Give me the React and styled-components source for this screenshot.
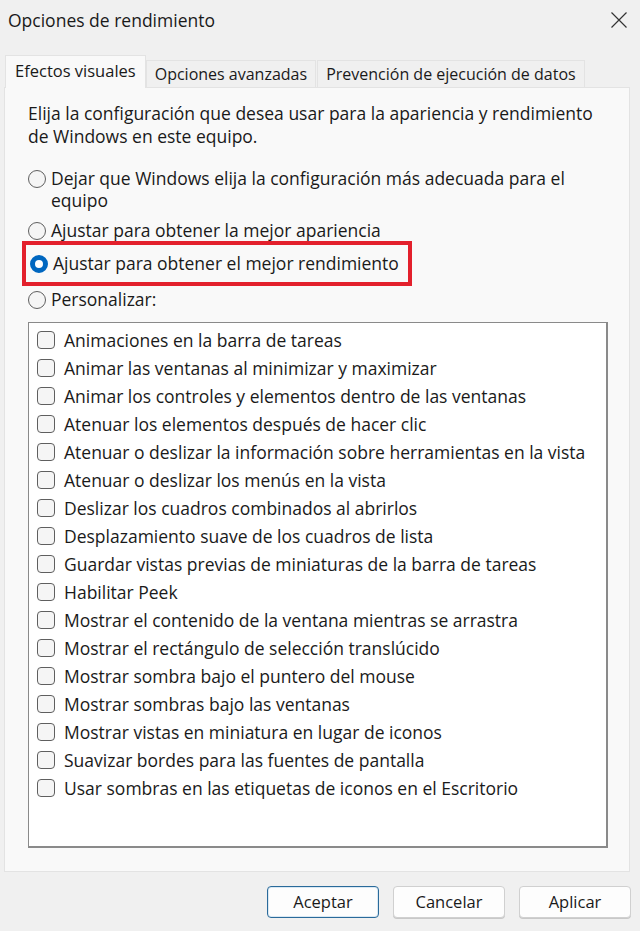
import styled, { createGlobalStyle } from "styled-components";

const GlobalStyle = createGlobalStyle`
  html, body {
    margin: 0;
    padding: 0;
    background: #f0f0f0;
  }
  body {
    font-family: "Open Sans", "Noto Sans", sans-serif;
    color: #1a1a1a;
  }
`;

const options = [
  "Animaciones en la barra de tareas",
  "Animar las ventanas al minimizar y maximizar",
  "Animar los controles y elementos dentro de las ventanas",
  "Atenuar los elementos después de hacer clic",
  "Atenuar o deslizar la información sobre herramientas en la vista",
  "Atenuar o deslizar los menús en la vista",
  "Deslizar los cuadros combinados al abrirlos",
  "Desplazamiento suave de los cuadros de lista",
  "Guardar vistas previas de miniaturas de la barra de tareas",
  "Habilitar Peek",
  "Mostrar el contenido de la ventana mientras se arrastra",
  "Mostrar el rectángulo de selección translúcido",
  "Mostrar sombra bajo el puntero del mouse",
  "Mostrar sombras bajo las ventanas",
  "Mostrar vistas en miniatura en lugar de iconos",
  "Suavizar bordes para las fuentes de pantalla",
  "Usar sombras en las etiquetas de iconos en el Escritorio",
];

const App = () => {
  return (
    <Window>
      <GlobalStyle />
      <TitleBar>
        <Title>Opciones de rendimiento</Title>
        <CloseButton>
          <svg width="18" height="18" viewBox="0 0 18 18">
            <path d="M1.5 1.5 L16.5 16.5 M16.5 1.5 L1.5 16.5" stroke="#333" strokeWidth="1.2" fill="none" />
          </svg>
        </CloseButton>
      </TitleBar>

      <Tabs>
        <Tab $active>Efectos visuales</Tab>
        <Tab>Opciones avanzadas</Tab>
        <Tab>Prevención de ejecución de datos</Tab>
      </Tabs>

      <Panel>
        <Intro>
          Elija la configuración que desea usar para la apariencia y rendimiento
          de Windows en este equipo.
        </Intro>

        <RadioGroup>
          <RadioRow>
            <Radio />
            <span>
              Dejar que Windows elija la configuración más adecuada para el equipo
            </span>
          </RadioRow>
          <RadioRow>
            <Radio />
            <span>Ajustar para obtener la mejor apariencia</span>
          </RadioRow>
          <Highlight>
            <RadioRow>
              <Radio $checked />
              <span>Ajustar para obtener el mejor rendimiento</span>
            </RadioRow>
          </Highlight>
          <RadioRow $after>
            <Radio />
            <span>Personalizar:</span>
          </RadioRow>
        </RadioGroup>

        <ListBox>
          {options.map((o) => (
            <CheckRow key={o}>
              <Checkbox />
              <span>{o}</span>
            </CheckRow>
          ))}
        </ListBox>
      </Panel>

      <Footer>
        <Button $primary>Aceptar</Button>
        <Button>Cancelar</Button>
        <Button>Aplicar</Button>
      </Footer>
    </Window>
  );
};

const Window = styled.div`
  width: 640px;
  height: 931px;
  background: #f0f0f0;
  display: flex;
  flex-direction: column;
  box-sizing: border-box;
  overflow: hidden;
`;

const TitleBar = styled.div`
  height: 40px;
  display: flex;
  align-items: center;
  justify-content: space-between;
  padding: 0 11px 0 8px;
`;

const Title = styled.div`
  font-size: 17.5px;
  color: #1a1a1a;
`;

const CloseButton = styled.div`
  display: flex;
  align-items: center;
  justify-content: center;
  width: 20px;
  height: 20px;
`;

const Tabs = styled.div`
  display: flex;
  align-items: flex-end;
  height: 48px;
  padding-left: 5px;
  margin-bottom: -1px;
`;

const Tab = styled.div`
  font-size: ${(p) => (p.$active ? "16.5px" : "16px")};
  padding: ${(p) => (p.$active ? "0 9px" : "0 8px")};
  box-sizing: border-box;
  height: ${(p) => (p.$active ? "33px" : "28px")};
  line-height: ${(p) => (p.$active ? "30px" : "27px")};
  background: ${(p) => (p.$active ? "#f9f9f9" : "#f0f0f0")};
  border: 1px solid #e3e3e3;
  border-bottom: ${(p) => (p.$active ? "none" : "1px solid #e3e3e3")};
  margin-right: ${(p) => (p.$active ? "0" : "1px")};
  position: relative;
  z-index: ${(p) => (p.$active ? 2 : 1)};
`;

const Panel = styled.div`
  margin: 0 10px 0 4px;
  height: 785px;
  background: #f9f9f9;
  border: 1px solid #e3e3e3;
  box-sizing: border-box;
  padding: 14px 21px 0 23px;
  position: relative;
  z-index: 1;
`;

const Intro = styled.p`
  margin: 0;
  font-size: 17.5px;
  line-height: 23px;
`;

const RadioGroup = styled.div`
  margin-top: 15px;
  display: flex;
  flex-direction: column;
`;

const RadioRow = styled.label`
  display: flex;
  align-items: flex-start;
  gap: 5px;
  font-size: 17.5px;
  line-height: 22px;
  padding: 4px 0;
  margin-top: ${(p) => (p.$after ? "-2px" : "0")};
`;

const Radio = styled.span`
  flex: none;
  width: 18px;
  height: 18px;
  margin-top: 3px;
  border-radius: 50%;
  box-sizing: border-box;
  border: ${(p) => (p.$checked ? "5px solid #0067c0" : "1px solid #5f5f5f")};
  background: ${(p) => (p.$checked ? "#fff" : "#f5f5f5")};
`;

const Highlight = styled.div`
  margin: -4px 0 0 -6px;
  padding: 3px 4px 4px;
  border: 4px solid #e3202c;
  width: 390px;
  box-sizing: border-box;
  white-space: nowrap;
`;

const ListBox = styled.div`
  margin-top: 8px;
  height: 526px;
  background: #fff;
  border: 1px solid #8a8a8a;
  border-right-width: 2px;
  border-bottom-width: 2px;
  box-sizing: border-box;
  padding: 3px 0 0 8px;
`;

const CheckRow = styled.div`
  display: flex;
  align-items: center;
  gap: 9px;
  height: 28px;
  font-size: 17.5px;
`;

const Checkbox = styled.span`
  flex: none;
  width: 18px;
  height: 18px;
  box-sizing: border-box;
  border: 1px solid #5f5f5f;
  border-radius: 4px;
  background: #f5f5f5;
`;

const Footer = styled.div`
  flex: 1;
  display: flex;
  justify-content: flex-end;
  align-items: center;
  gap: 14px;
  padding-right: 9px;
`;

const Button = styled.button`
  width: 112px;
  height: 32px;
  font-family: inherit;
  font-size: 16.5px;
  color: #1a1a1a;
  background: #fdfdfd;
  border-radius: 4px;
  border: 1px solid ${(p) => (p.$primary ? "#2a6a9a" : "#d0d0d0")};
  box-shadow: ${(p) => (p.$primary ? "inset 0 0 0 1px #d9e8f3" : "0 1px 0 #c8c8c8")};
`;

export default App;
